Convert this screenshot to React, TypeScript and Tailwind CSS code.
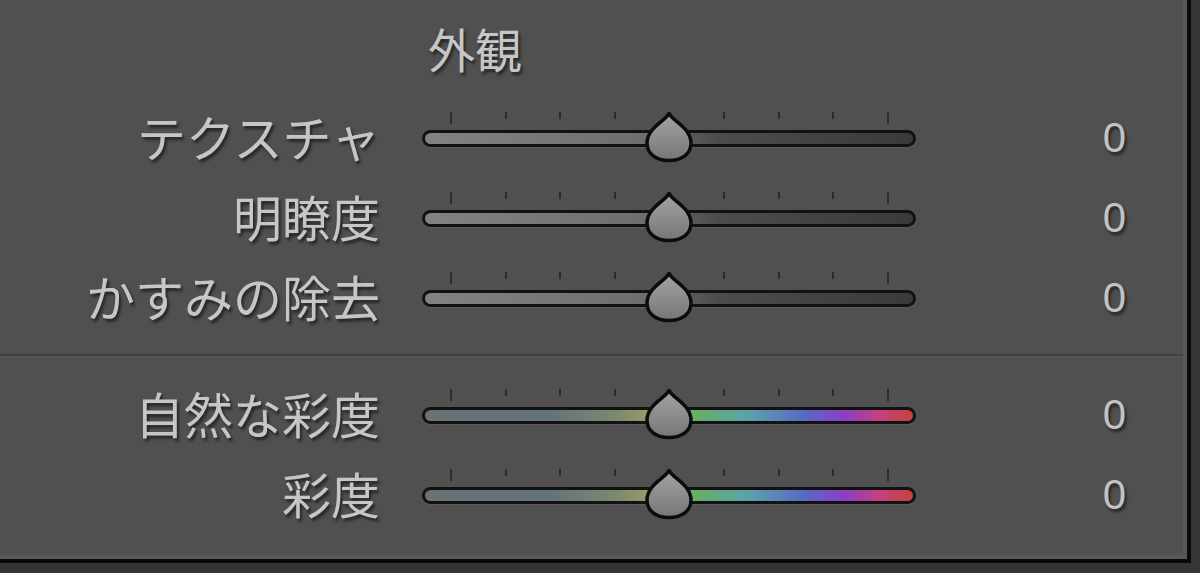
import React from "react";

type Row = { label: string; color?: boolean };

const tones: Row[] = [
  { label: "テクスチャ" },
  { label: "明瞭度" },
  { label: "かすみの除去" },
];

const colors: Row[] = [
  { label: "自然な彩度", color: true },
  { label: "彩度", color: true },
];

const greyTrack = "bg-[linear-gradient(to_right,#838383,#6e6e6e_45%,#4c4c4c_60%,#3a3a3a)]";
const colorTrack =
  "bg-[linear-gradient(to_right,#6c7174,#61737a_25%,#7f8a70_40%,#a9aa5e_50%,#66ad6c_56%,#5aa4a8_66%,#5b67c6_78%,#8c3fc2_86%,#c2417e_93%,#c8413e)]";

function Thumb() {
  return (
    <svg width="49" height="52" viewBox="0 0 49 52" className="absolute left-1/2 top-[-19px] -translate-x-1/2">
      <defs>
        <linearGradient id="thumb" x1="0" y1="0" x2="0" y2="1">
          <stop offset="0" stopColor="#a4a4a4" />
          <stop offset="1" stopColor="#767676" />
        </linearGradient>
      </defs>
      <path
        d="M24.5 2.5 C28 10 46.5 17 46.5 32 C46.5 43 37.5 49.5 24.5 49.5 C11.5 49.5 2.5 43 2.5 32 C2.5 17 21 10 24.5 2.5 Z"
        fill="url(#thumb)"
        stroke="#0c0c0c"
        strokeWidth="3.5"
        strokeLinejoin="round"
      />
    </svg>
  );
}

function Slider({ color }: { color?: boolean }) {
  return (
    <div className="relative ml-[42px] h-[17px] w-[494px]">
      <div className="absolute left-[28px] right-[27px] top-[-18px] flex items-end justify-between">
        {Array.from({ length: 9 }).map((_, i) => (
          <span
            key={i}
            className={
              i === 0 || i === 8
                ? "h-[12px] w-[2px] bg-[#2b2b2b]"
                : "mb-[5px] h-[7px] w-[2px] bg-[#2b2b2b]"
            }
          />
        ))}
      </div>
      <div
        className={`h-full w-full rounded-full border-[3px] border-[#121212] shadow-[0_1px_1px_rgba(255,255,255,0.08)] ${
          color ? colorTrack : greyTrack
        }`}
      />
      <Thumb />
    </div>
  );
}

function SliderRow({ label, color }: Row) {
  return (
    <div className="flex h-[80px] items-center">
      <div className="mb-[6px] w-[380px] text-right text-[49px] leading-none text-[#c6c6c6] [text-shadow:2px_3px_3px_rgba(0,0,0,0.55)]">
        {label}
      </div>
      <Slider color={color} />
      <div className="flex-1 pr-[57px] text-right font-['Liberation_Sans',sans-serif] text-[42px] leading-none text-[#c2c2c2] [text-shadow:2px_3px_3px_rgba(0,0,0,0.55)]">
        0
      </div>
    </div>
  );
}

export default function App() {
  return (
    <div className="h-[573px] w-[1200px] overflow-hidden bg-[#353535] font-['Noto_Sans_CJK_JP',sans-serif]">
      <div className="h-[563px] w-[1191px] border-b-[4px] border-r-[4px] border-[#0a0a0a]">
        <div className="h-full w-full border-b-[4px] border-r-[4px] border-[#585858] bg-[#505050]">
          <div className="flex h-[98px] items-center pl-[428px] pb-[4px] text-[47px] leading-none text-[#c6c6c6] [text-shadow:2px_3px_3px_rgba(0,0,0,0.55)]">
            外観
          </div>
          {tones.map((r) => (
            <SliderRow key={r.label} {...r} />
          ))}
          <div className="flex h-[37px] flex-col pt-[16px]">
            <div className="h-[2px] bg-[#3f3f3f]" />
            <div className="h-[1px] bg-[#575757]" />
          </div>
          {colors.map((r) => (
            <SliderRow key={r.label} {...r} />
          ))}
        </div>
      </div>
    </div>
  );
}
